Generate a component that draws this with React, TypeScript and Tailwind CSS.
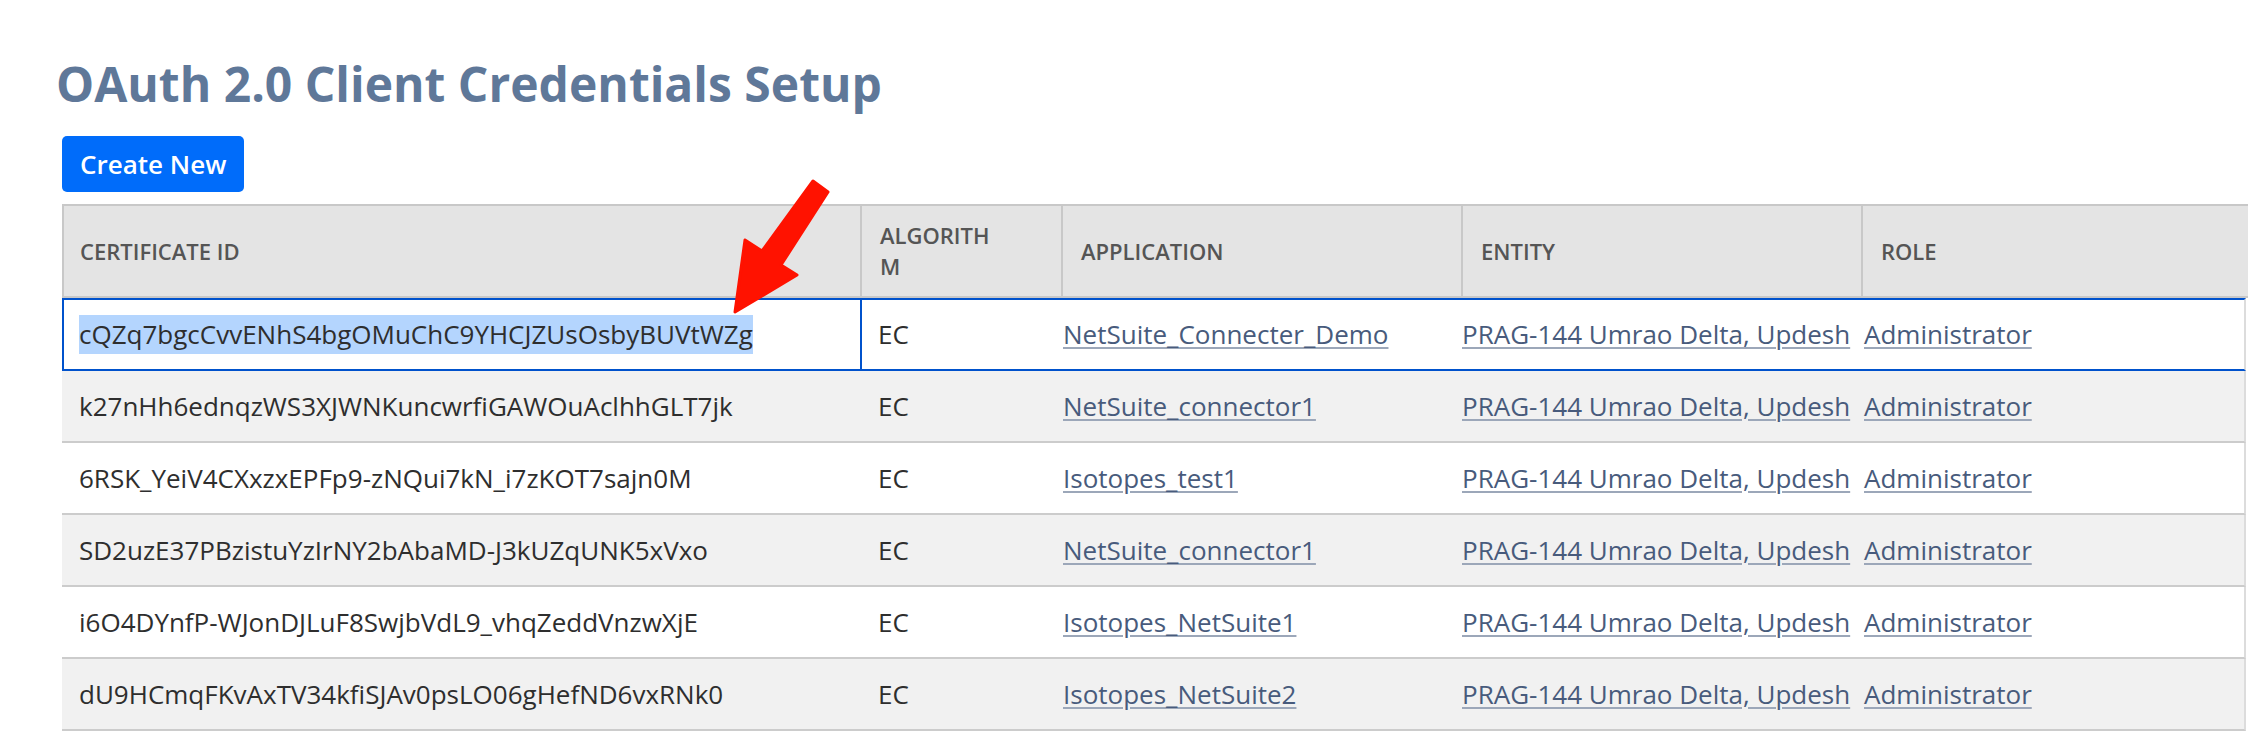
import React from "react";

const credentials = [
  {
    id: "cQZq7bgcCvvENhS4bgOMuChC9YHCJZUsOsbyBUVtWZg",
    algorithm: "EC",
    application: "NetSuite_Connecter_Demo",
  },
  {
    id: "k27nHh6ednqzWS3XJWNKuncwrfiGAWOuAclhhGLT7jk",
    algorithm: "EC",
    application: "NetSuite_connector1",
  },
  {
    id: "6RSK_YeiV4CXxzxEPFp9-zNQui7kN_i7zKOT7sajn0M",
    algorithm: "EC",
    application: "Isotopes_test1",
  },
  {
    id: "SD2uzE37PBzistuYzIrNY2bAbaMD-J3kUZqUNK5xVxo",
    algorithm: "EC",
    application: "NetSuite_connector1",
  },
  {
    id: "i6O4DYnfP-WJonDJLuF8SwjbVdL9_vhqZeddVnzwXjE",
    algorithm: "EC",
    application: "Isotopes_NetSuite1",
  },
  {
    id: "dU9HCmqFKvAxTV34kfiSJAv0psLO06gHefND6vxRNk0",
    algorithm: "EC",
    application: "Isotopes_NetSuite2",
  },
];

const cols = "grid grid-cols-[798px_201px_400px_400px_1fr]";
const link =
  "whitespace-nowrap text-[#485b7c] underline decoration-[#9ca7b9] decoration-2 underline-offset-[3px]";

export default function App() {
  return (
    <div className="relative h-[756px] w-[2248px] overflow-hidden bg-white font-['Open_Sans',sans-serif]">
      <div className="pl-[62px] pt-[54px]">
        <h1 className="-ml-[6px] text-[48px] font-bold leading-[60px] text-[#5f7899]">
          OAuth 2.0 Client Credentials Setup
        </h1>

        <button className="mt-[22px] flex h-[56px] items-center rounded-[5px] bg-[#006cfa] px-[18px] text-[26px] font-semibold leading-none text-white">
          Create New
        </button>

        <div className="mt-[12px]">
          <div
            className={`${cols} h-[94px] border-y-2 border-[#c8c8c8] bg-[#e4e4e4] text-[22px] font-semibold uppercase leading-[30.8px] text-[#555555]`}
          >
            <div className="flex items-center border-l-2 border-[#c8c8c8] pl-[16px]">
              Certificate ID
            </div>
            <div className="flex items-center border-l-2 border-[#c8c8c8] pl-[18px]">
              <span className="w-[118px] break-all">Algorithm</span>
            </div>
            <div className="flex items-center border-l-2 border-[#c8c8c8] pl-[18px]">
              Application
            </div>
            <div className="flex items-center border-l-2 border-[#c8c8c8] pl-[18px]">
              Entity
            </div>
            <div className="flex items-center border-l-2 border-[#c8c8c8] pl-[18px]">
              Role
            </div>
          </div>

          {credentials.map((row, index) => {
            const focused = index === 0;
            return (
              <div
                key={row.id}
                className={`${cols} mr-[2px] border-r-2 border-r-[#dcdcdc] text-[26px] text-[#2e2e2e] ${
                  focused
                    ? "h-[73px] border-y-2 border-y-[#0052cc] bg-white"
                    : "h-[72px] border-b-2 border-b-[#cccccc]"
                } ${!focused && index % 2 === 1 ? "bg-[#f1f1f1]" : ""} ${
                  !focused && index % 2 === 0 ? "bg-white" : ""
                }`}
              >
                <div
                  className={`flex items-center border-l-2 pl-[15px] whitespace-nowrap ${
                    focused ? "border-[#0052cc]" : "border-transparent"
                  }`}
                >
                  {focused ? (
                    <span className="bg-[#b4d5fe]">{row.id}</span>
                  ) : (
                    row.id
                  )}
                </div>
                <div
                  className={`flex items-center border-l-2 pl-[16px] ${
                    focused ? "border-[#0052cc]" : "border-transparent"
                  }`}
                >
                  {row.algorithm}
                </div>
                <div className="flex items-center pl-[2px]">
                  <a href="#" className={link}>
                    {row.application}
                  </a>
                </div>
                <div className="flex items-center pl-[1px]">
                  <a href="#" className={link}>
                    PRAG-144 Umrao Delta, Updesh
                  </a>
                </div>
                <div className="flex items-center pl-[3px]">
                  <a href="#" className={link}>
                    Administrator
                  </a>
                </div>
              </div>
            );
          })}
        </div>
      </div>

      {/* annotation arrow */}
      <svg
        className="pointer-events-none absolute left-0 top-0"
        width="2248"
        height="756"
        viewBox="0 0 2248 756"
      >
        <polygon
          points="813,181 828,192 781,265 797,275 735,312 745,240 762,251"
          fill="#ff1200"
          stroke="#ff1200"
          strokeWidth="3"
          strokeLinejoin="round"
        />
      </svg>
    </div>
  );
}
